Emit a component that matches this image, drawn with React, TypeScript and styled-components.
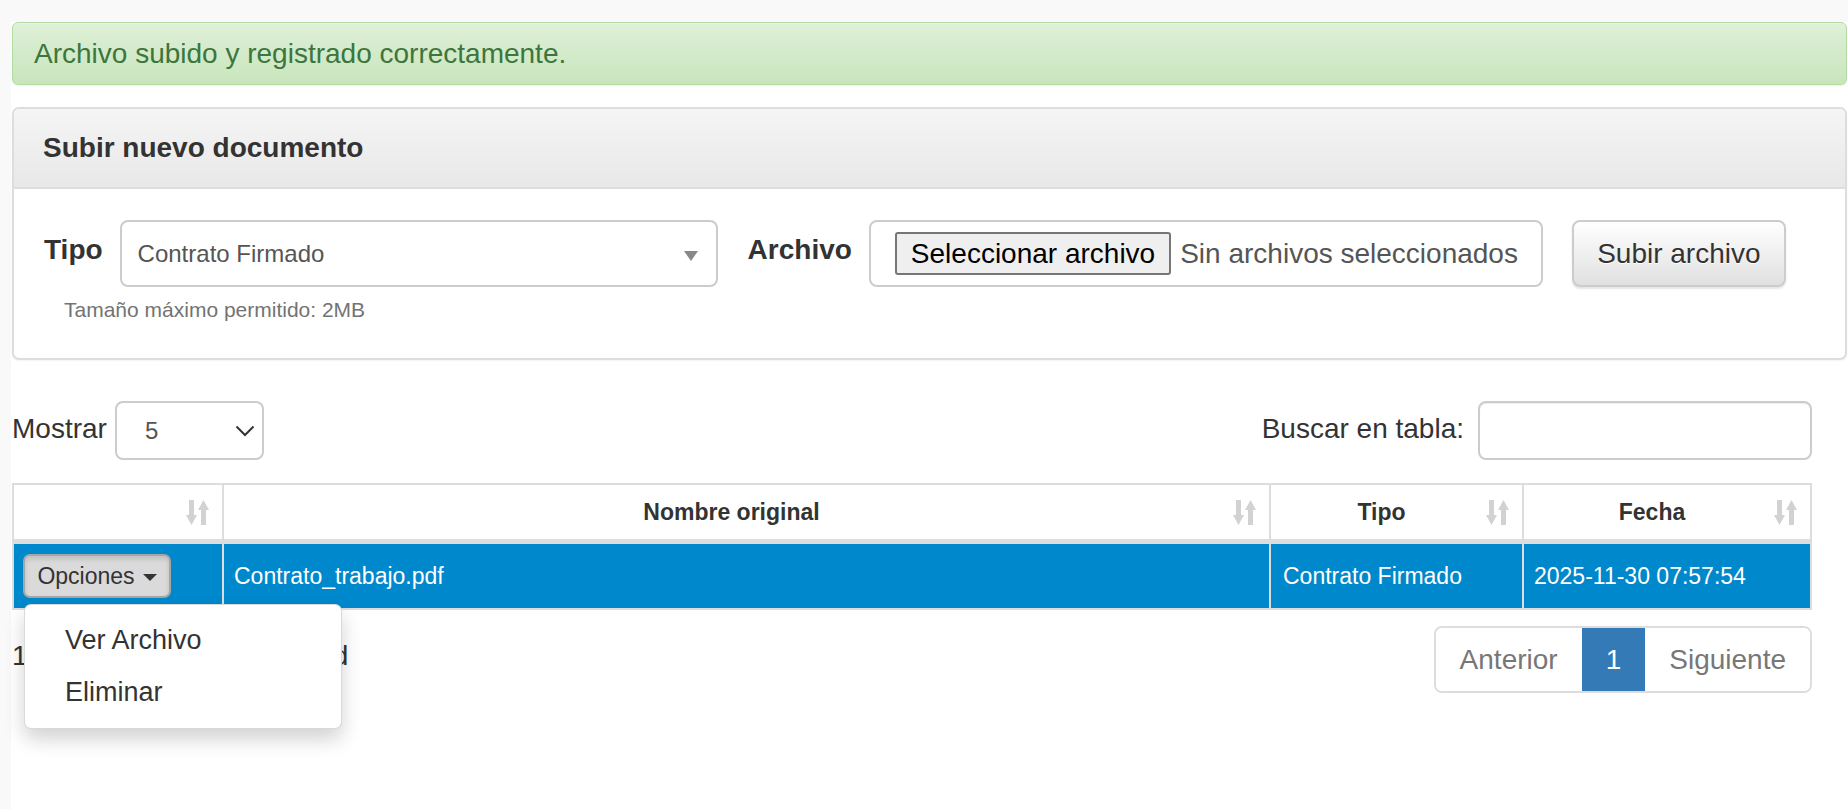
import React from "react";
import styled, { createGlobalStyle } from "styled-components";

const GlobalStyle = createGlobalStyle`
  html, body { margin: 0; padding: 0; }
  body {
    background: #f9f9f9;
    font-family: "Liberation Sans", Arial, Helvetica, sans-serif;
    color: #333;
    overflow: hidden;
  }
  * { box-sizing: border-box; }
`;

const Page = styled.div`
  padding: 22px 0 0 11px;
  min-height: 809px;
`;

const Main = styled.main`
  background: #fff;
  min-height: 787px;
  padding: 0 1px 0 1px;
`;

const Alert = styled.div`
  height: 63px;
  display: flex;
  align-items: center;
  padding: 0 21px;
  border: 1px solid #b2dba1;
  border-radius: 6px;
  background: linear-gradient(to bottom, #dff0d8 0%, #c8e5bc 100%);
  box-shadow: inset 0 1px 0 rgba(255, 255, 255, 0.25), 0 1px 2px rgba(0, 0, 0, 0.05);
  color: #3c763d;
  font-size: 28px;
  line-height: 32px;
`;

const Panel = styled.section`
  margin-top: 22px;
  border: 2px solid #dddddd;
  border-radius: 7px;
  background: #fff;
  box-shadow: 0 1px 2px rgba(0, 0, 0, 0.05);
  overflow: hidden;
`;

const PanelHeading = styled.header`
  height: 80px;
  display: flex;
  align-items: center;
  padding: 0 29px;
  border-bottom: 2px solid #dddddd;
  background: linear-gradient(to bottom, #f5f5f5 0%, #e8e8e8 100%);
`;

const PanelTitle = styled.h3`
  margin: 0;
  font-size: 28px;
  line-height: 32px;
  font-weight: bold;
  color: #333;
`;

const PanelBody = styled.div`
  padding: 31px 30px 36px 30px;
`;

const FormRow = styled.div`
  display: flex;
  align-items: flex-start;
`;

const FieldLabel = styled.label<{ $gapAfter: number }>`
  margin-top: 14px;
  margin-right: ${(p) => p.$gapAfter}px;
  font-size: 28px;
  line-height: 32px;
  font-weight: bold;
  color: #333;
  white-space: nowrap;
`;

const SelectBox = styled.div`
  width: 598px;
  height: 67px;
  margin-right: 30px;
  display: flex;
  align-items: center;
  justify-content: space-between;
  padding: 0 18px 0 16px;
  border: 2px solid #cccccc;
  border-radius: 8px;
  background: #fff;
  font-size: 24px;
  color: #555;
`;

const SelectCaret = styled.span`
  width: 0;
  height: 0;
  border-left: 7px solid transparent;
  border-right: 7px solid transparent;
  border-top: 10px solid #888;
  margin-top: 4px;
`;

const FileBox = styled.div`
  width: 674px;
  height: 67px;
  margin-right: 29px;
  display: flex;
  align-items: center;
  padding-left: 24px;
  border: 2px solid #cccccc;
  border-radius: 8px;
  background: #fff;
`;

const FileButton = styled.span`
  height: 43px;
  display: flex;
  align-items: center;
  padding: 0 14px;
  border: 2px solid #767676;
  border-radius: 3px;
  background: #efefef;
  font-size: 28px;
  color: #000;
  white-space: nowrap;
`;

const FileStatus = styled.span`
  margin-left: 9px;
  font-size: 28px;
  color: #555;
  white-space: nowrap;
`;

const UploadButton = styled.button`
  width: 214px;
  height: 67px;
  padding: 0;
  border: 2px solid #cccccc;
  border-radius: 8px;
  background: linear-gradient(to bottom, #ffffff 0%, #e0e0e0 100%);
  box-shadow: inset 0 1px 0 rgba(255, 255, 255, 0.15), 0 2px 2px rgba(0, 0, 0, 0.1);
  text-shadow: 0 1px 0 #fff;
  font-family: inherit;
  font-size: 28px;
  color: #333;
  cursor: pointer;
`;

const HelpText = styled.p`
  margin: 11px 0 0 20px;
  font-size: 21px;
  line-height: 24px;
  color: #737373;
`;

const TableSection = styled.div`
  margin: 41px 35px 0 0;
`;

const Controls = styled.div`
  display: flex;
  align-items: center;
  justify-content: space-between;
  height: 59px;
`;

const ControlGroup = styled.div<{ $gap: number }>`
  display: flex;
  align-items: center;
  gap: ${(p) => p.$gap}px;
  font-size: 28px;
  color: #333;
`;

const ControlLabel = styled.span`
  font-size: 28px;
  line-height: 32px;
  margin-top: -4px;
`;

const LengthSelect = styled.div`
  width: 149px;
  height: 59px;
  display: flex;
  align-items: center;
  justify-content: space-between;
  padding: 0 7px 0 28px;
  border: 2px solid #cccccc;
  border-radius: 8px;
  background: #fff;
  font-size: 24px;
  color: #555;
`;

const SearchInput = styled.div`
  width: 334px;
  height: 59px;
  border: 2px solid #cccccc;
  border-radius: 8px;
  background: #fff;
  box-shadow: inset 0 1px 1px rgba(0, 0, 0, 0.075);
`;

const Table = styled.table`
  width: 100%;
  margin-top: 23px;
  border-collapse: separate;
  border-spacing: 0;
  table-layout: fixed;
  border-top: 2px solid #dddddd;
  border-left: 2px solid #dddddd;
`;

const Th = styled.th<{ $w?: number }>`
  ${(p) => (p.$w ? `width: ${p.$w}px;` : "")}
  height: 59px;
  padding: 0 13px 0 6px;
  border-right: 2px solid #dddddd;
  border-bottom: 5px solid #dddddd;
  background: #fff;
  font-size: 23px;
  font-weight: bold;
  color: #333;
`;

const ThInner = styled.div`
  display: flex;
  align-items: center;
`;

const ThLabel = styled.span`
  flex: 1;
  text-align: center;
`;

const Td = styled.td<{ $pl: number }>`
  height: 66px;
  padding: 0 8px 0 ${(p) => p.$pl}px;
  border-right: 2px solid #dddddd;
  border-bottom: 2px solid #dddddd;
  background: #0088cc;
  color: #fff;
  font-size: 23px;
  white-space: nowrap;
  vertical-align: middle;
`;

const BtnGroup = styled.div`
  position: relative;
  display: inline-block;
`;

const OptionsButton = styled.button`
  height: 44px;
  width: 148px;
  display: flex;
  align-items: center;
  justify-content: center;
  gap: 8px;
  padding: 0;
  border: 2px solid #a6a6a6;
  border-radius: 7px;
  background: #dadada;
  box-shadow: inset 0 3px 5px rgba(0, 0, 0, 0.125);
  font-family: inherit;
  font-size: 23px;
  color: #333;
`;

const Caret = styled.span`
  width: 0;
  height: 0;
  border-left: 7px solid transparent;
  border-right: 7px solid transparent;
  border-top: 7px solid #333;
  margin-top: 2px;
`;

const Menu = styled.ul`
  position: absolute;
  top: calc(100% + 6px);
  left: 1px;
  z-index: 10;
  width: 318px;
  margin: 0;
  padding: 9px 0 10px 0;
  list-style: none;
  background: #fff;
  border: 1px solid rgba(0, 0, 0, 0.15);
  border-radius: 7px;
  box-shadow: 0 10px 20px rgba(0, 0, 0, 0.18);
`;

const MenuItem = styled.li`
  height: 52px;
  line-height: 52px;
  padding-left: 40px;
  font-size: 27px;
  color: #333;
  white-space: nowrap;
`;

const Footer = styled.div`
  display: flex;
  justify-content: space-between;
  align-items: flex-start;
  margin-top: 16px;
`;

const Info = styled.div`
  padding-top: 14px;
  font-size: 28px;
  line-height: 32px;
  color: #333;
  white-space: nowrap;
`;

const Pagination = styled.ul`
  display: flex;
  margin: 0;
  padding: 0;
  list-style: none;
  border: 2px solid #dddddd;
  border-radius: 8px;
  overflow: hidden;
`;

const PageItem = styled.li<{ $active?: boolean }>`
  height: 63px;
  display: flex;
  align-items: center;
  padding: 0 24px;
  font-size: 28px;
  color: ${(p) => (p.$active ? "#fff" : "#777")};
  background: ${(p) => (p.$active ? "#337ab7" : "#fff")};
  ${(p) => (p.$active ? "margin: -2px 0; height: 67px;" : "")}
`;

const SortIcon = () => (
  <svg width="23" height="25" viewBox="0 0 23 25" aria-hidden="true">
    <g fill="#d2d2d2">
      <rect x="3" y="0" width="5" height="16" />
      <polygon points="0,15 11,15 5.5,25" />
      <polygon points="12,10 23,10 17.5,0" />
      <rect x="15" y="9" width="5" height="16" />
    </g>
  </svg>
);

const Chevron = () => (
  <svg width="20" height="12" viewBox="0 0 20 12" aria-hidden="true">
    <polyline points="1.5,1.5 10,10 18.5,1.5" fill="none" stroke="#333" strokeWidth="2" />
  </svg>
);

const headers: { label: string; w?: number }[] = [
  { label: "", w: 210 },
  { label: "Nombre original", w: 1047 },
  { label: "Tipo", w: 253 },
  { label: "Fecha" },
];

export default function App() {
  return (
    <>
      <GlobalStyle />
      <Page>
        <Main>
          <Alert>Archivo subido y registrado correctamente.</Alert>

          <Panel>
            <PanelHeading>
              <PanelTitle>Subir nuevo documento</PanelTitle>
            </PanelHeading>
            <PanelBody>
              <FormRow>
                <FieldLabel $gapAfter={17}>Tipo</FieldLabel>
                <SelectBox>
                  <span>Contrato Firmado</span>
                  <SelectCaret />
                </SelectBox>
                <FieldLabel $gapAfter={17}>Archivo</FieldLabel>
                <FileBox>
                  <FileButton>Seleccionar archivo</FileButton>
                  <FileStatus>Sin archivos seleccionados</FileStatus>
                </FileBox>
                <UploadButton type="button">Subir archivo</UploadButton>
              </FormRow>
              <HelpText>Tamaño máximo permitido: 2MB</HelpText>
            </PanelBody>
          </Panel>

          <TableSection>
            <Controls>
              <ControlGroup $gap={8}>
                <ControlLabel>Mostrar</ControlLabel>
                <LengthSelect>
                  <span>5</span>
                  <Chevron />
                </LengthSelect>
              </ControlGroup>
              <ControlGroup $gap={14}>
                <ControlLabel>Buscar en tabla:</ControlLabel>
                <SearchInput />
              </ControlGroup>
            </Controls>

            <Table>
              <thead>
                <tr>
                  {headers.map((h, i) => (
                    <Th key={i} $w={h.w}>
                      <ThInner>
                        <ThLabel>{h.label}</ThLabel>
                        <SortIcon />
                      </ThInner>
                    </Th>
                  ))}
                </tr>
              </thead>
              <tbody>
                <tr>
                  <Td $pl={9}>
                    <BtnGroup>
                      <OptionsButton type="button">
                        Opciones <Caret />
                      </OptionsButton>
                      <Menu>
                        <MenuItem>Ver Archivo</MenuItem>
                        <MenuItem>Eliminar</MenuItem>
                      </Menu>
                    </BtnGroup>
                  </Td>
                  <Td $pl={10}>Contrato_trabajo.pdf</Td>
                  <Td $pl={12}>Contrato Firmado</Td>
                  <Td $pl={10}>2025-11-30 07:57:54</Td>
                </tr>
              </tbody>
            </Table>

            <Footer>
              <Info>1 documento en la facultad</Info>
              <Pagination>
                <PageItem>Anterior</PageItem>
                <PageItem $active>1</PageItem>
                <PageItem>Siguiente</PageItem>
              </Pagination>
            </Footer>
          </TableSection>
        </Main>
      </Page>
    </>
  );
}
